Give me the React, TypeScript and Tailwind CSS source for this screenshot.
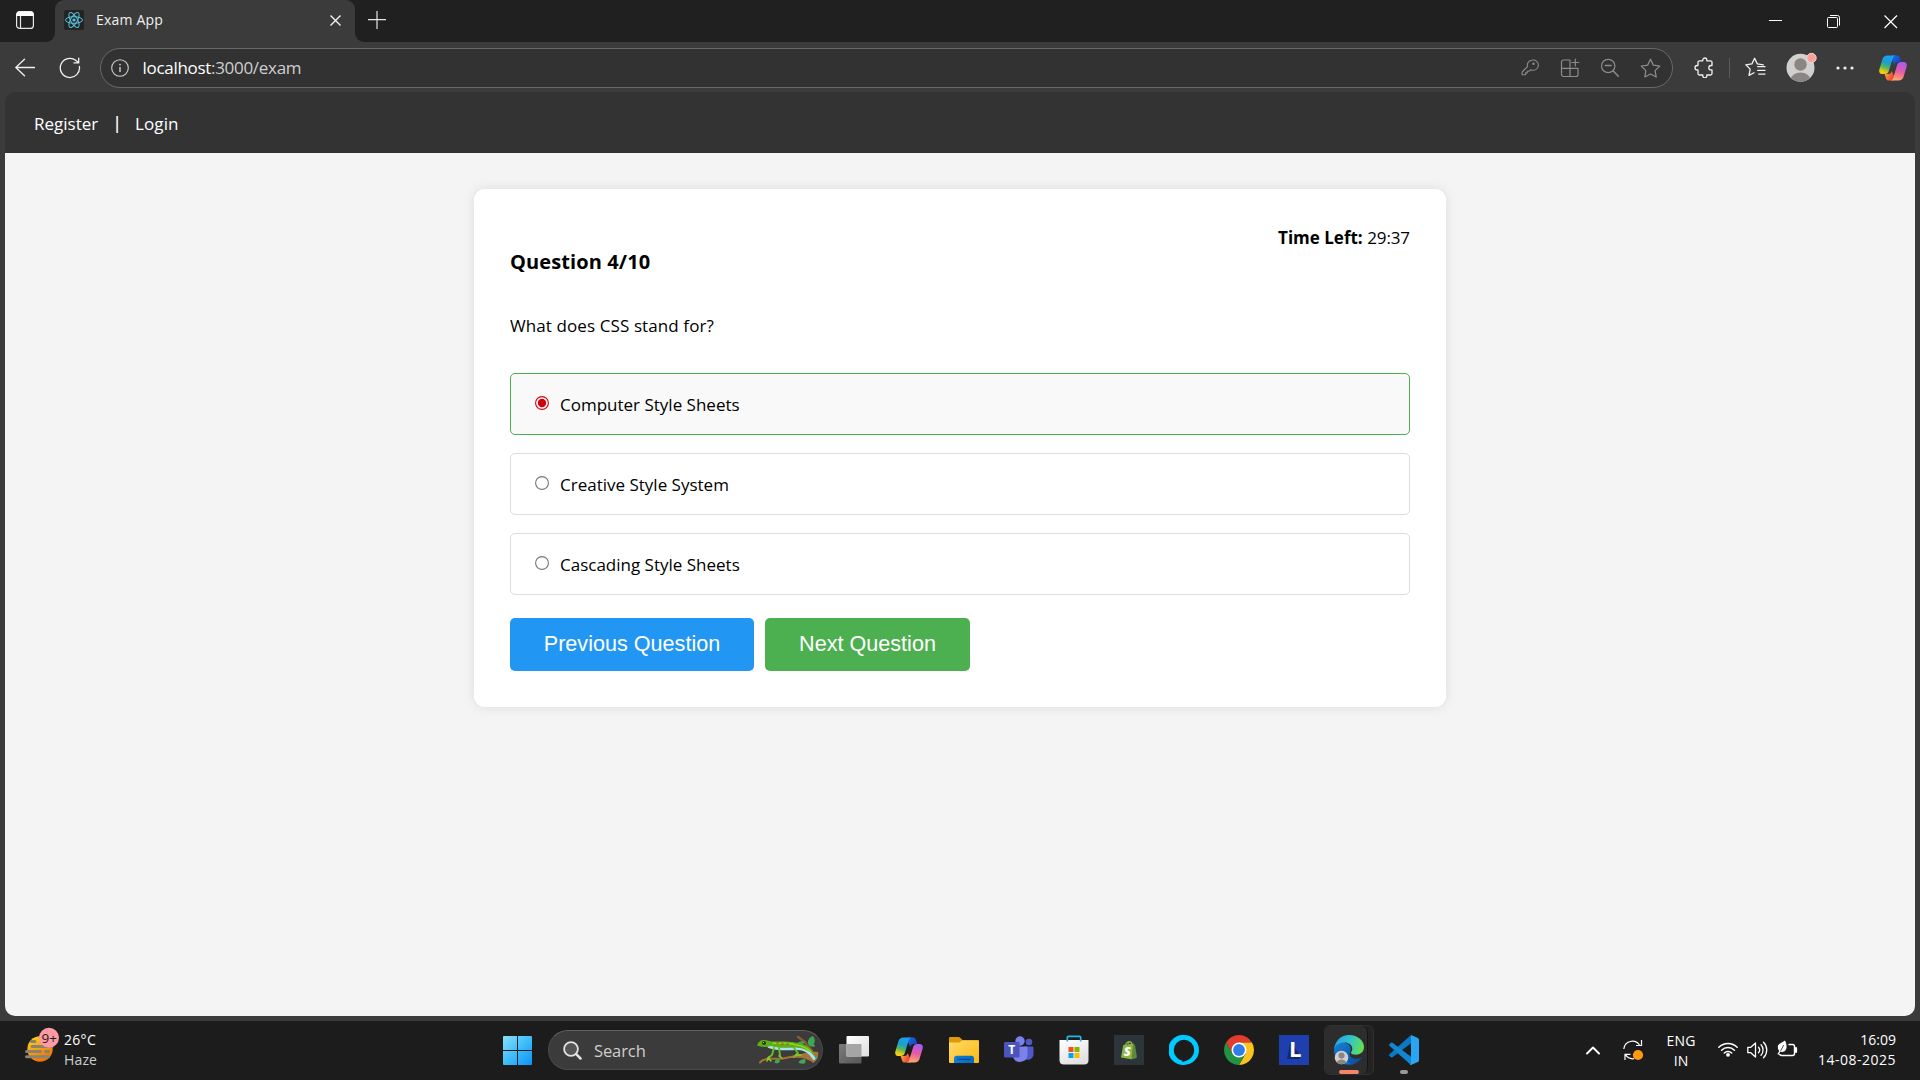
import type { ReactNode } from "react";

/* ---------- shared artwork ---------- */

function Copilot({ id, className }: { id: string; className: string }) {
  const blue = id + "-blue";
  const dark = id + "-dark";
  const pink = id + "-pink";
  const orange = id + "-orange";
  return (
    <svg viewBox="0 0 28 26" className={className}>
      <defs>
        <linearGradient id={blue} x1="0.6" y1="0" x2="0.3" y2="1">
          <stop offset="0" stopColor="#1da0f2" />
          <stop offset="0.4" stopColor="#1b9fc9" />
          <stop offset="0.65" stopColor="#55b75a" />
          <stop offset="0.9" stopColor="#f2cc12" />
        </linearGradient>
        <linearGradient id={dark} x1="0" y1="0" x2="1" y2="1">
          <stop offset="0" stopColor="#1a6fe8" />
          <stop offset="1" stopColor="#1238b0" />
        </linearGradient>
        <linearGradient id={pink} x1="0.6" y1="0" x2="0.4" y2="1">
          <stop offset="0" stopColor="#a45cf2" />
          <stop offset="0.5" stopColor="#e85aa6" />
          <stop offset="1" stopColor="#ffab62" />
        </linearGradient>
        <linearGradient id={orange} x1="0" y1="0" x2="1" y2="0.4">
          <stop offset="0" stopColor="#ffb33c" />
          <stop offset="1" stopColor="#ea4436" />
        </linearGradient>
      </defs>
      <path d="M13 .5h5c1.800 0 2.600 1 3.100 2.600L22.300 7h-3.500c-2 0-3 1-3.600 3L13 5z" fill={`url(#${dark})`} />
      <path d="M15 25.500H10c-1.800 0-2.600-1-3.100-2.600L5.700 19h3.500c2 0 3-1 3.600-3L15 21z" fill={`url(#${orange})`} />
      <path d="M8.500.5h8c-1.700.3-2.400 1.500-3 3.500l-3.700 12c-.7 2.200-1.900 3-4 3H3.500C.8 19-.3 17.200.4 14.300L3.500 4C4.200 1.700 5.800.5 8.500.5z" fill={`url(#${blue})`} />
      <path d="M19.500 25.500h-8c1.700-.3 2.400-1.500 3-3.500l3.700-12c.7-2.200 1.900-3 4-3h2.300c2.700 0 3.800 1.800 3.100 4.700L24.500 22c-.7 2.300-2.300 3.500-5 3.500z" fill={`url(#${pink})`} />
    </svg>
  );
}

function ReactLogo() {
  return (
    <span className="flex h-5 w-5 shrink-0 items-center justify-center rounded-[2px] bg-[#232323]">
      <svg viewBox="-10 -10 20 20" className="h-5 w-5" fill="none" stroke="#58c4dc" strokeWidth="1">
        <circle r="1.600" fill="#58c4dc" stroke="none" />
        <ellipse rx="8.500" ry="3.300" />
        <ellipse rx="8.500" ry="3.300" transform="rotate(60)" />
        <ellipse rx="8.500" ry="3.300" transform="rotate(120)" />
      </svg>
    </span>
  );
}

/* ---------- browser chrome ---------- */

function TitleBar() {
  return (
    <div className="flex h-[42px] bg-[#3b3b3b]">
      <div className="flex w-[55px] items-start rounded-br-[9px] bg-[#202020] pt-[11px] pl-4">
        <svg viewBox="0 0 18 18" className="h-[18px] w-[18px]">
          <rect x=".6" y=".6" width="16.800" height="16.800" rx="3" fill="none" stroke="#e6e6e6" strokeWidth="1.200" />
          <path d="M.5 5V3.500a3 3 0 0 1 3-3h11a3 3 0 0 1 3 3V5z" fill="#fff" />
          <path d="M4.500 5v12" stroke="#e6e6e6" strokeWidth="1.200" />
        </svg>
      </div>
      <div className="bg-[#202020]">
        <div className="flex h-[42px] w-[300px] items-start rounded-t-[9px] bg-[#3b3b3b] pt-[10px] pl-[9px]">
          <ReactLogo />
          <span className="ml-3 w-[68px] text-[14px] leading-5 tracking-[0.200px] whitespace-nowrap text-[#f0f0f0]">Exam App</span>
          <svg viewBox="0 0 11 11" className="mt-[5px] ml-[166px] h-[11px] w-[11px]" stroke="#f3f3f3" strokeWidth="1.400">
            <path d="M.5.5l10 10M10.500.5l-10 10" />
          </svg>
        </div>
      </div>
      <div className="flex flex-1 items-start rounded-bl-[9px] bg-[#202020] pl-[13px]">
        <svg viewBox="0 0 18 18" className="mt-[11px] h-[18px] w-[18px]" stroke="#e6e6e6" strokeWidth="1.200">
          <path d="M9 0v18M0 8.600h18" />
        </svg>
        <span className="flex-1" />
        <svg viewBox="0 0 13 13" className="mt-[15px] h-[13px] w-[13px]" stroke="#fff" strokeWidth="1">
          <path d="M0 5.500h13" />
        </svg>
        <svg viewBox="0 0 14 14" className="mt-[15px] ml-[45px] h-[14px] w-[14px]" fill="none" stroke="#fff" strokeWidth="1">
          <rect x=".5" y="2.500" width="10" height="10" rx="1" />
          <path d="M3 .5h7.500a2 2 0 0 1 2 2V10.500" />
        </svg>
        <svg viewBox="0 0 14 14" className="mt-[15px] mr-[22px] ml-[43px] h-[14px] w-[14px]" stroke="#fff" strokeWidth="1.200">
          <path d="M.5.5l12.500 12.500M13 .5L.5 13" />
        </svg>
      </div>
    </div>
  );
}

const STAR = "M10 1.200l2.700 5.600 6.100.9-4.400 4.300 1 6.100L10 15.200l-5.400 2.900 1-6.100L1.200 7.700l6.100-.9z";

function AddressIcon({ children, className }: { children: ReactNode; className: string }) {
  return (
    <svg viewBox="0 0 20 20" className={className} fill="none" stroke="#8c8c8c" strokeWidth="1.200" strokeLinejoin="round" strokeLinecap="round">
      {children}
    </svg>
  );
}

function Toolbar() {
  return (
    <div className="flex h-[50px] items-start bg-[#3b3b3b] pt-[6px]">
      <svg viewBox="0 0 20 20" className="mt-[9px] ml-[15px] h-5 w-5 shrink-0" fill="none" stroke="#f0f0f0" strokeWidth="1.300" strokeLinecap="round" strokeLinejoin="round">
        <path d="M19.500 10.500H.8M9.500 2.200L.8 10.500l8.700 8.300" />
      </svg>
      <svg viewBox="0 0 22 22" className="mt-[9px] ml-6 h-[22px] w-[22px] shrink-0" fill="none" stroke="#f0f0f0" strokeWidth="1.300" strokeLinecap="round" strokeLinejoin="round">
        <path d="M20.400 9.500A9.600 9.600 0 1 1 17 3.500l2.500 2.200M19.700 1.200v4.700h-4.700" />
      </svg>
      <div className="ml-[19px] flex h-10 w-[1573px] shrink-0 items-center rounded-full border border-[#696969] bg-[#323232]">
        <svg viewBox="0 0 18 18" className="ml-[10px] h-[18px] w-[18px]" fill="none" stroke="#cfcfcf" strokeWidth="1.100">
          <circle cx="9" cy="9" r="8.300" />
          <path d="M9 8v5" strokeWidth="1.400" />
          <circle cx="9" cy="5.600" r=".9" fill="#cfcfcf" stroke="none" />
        </svg>
        <span className="ml-[13.500px] text-[17px] leading-5 tracking-[-0.300px] text-[#cfcfcf]">
          <span className="text-white">localhost</span>:3000/exam
        </span>
        <span className="flex-1" />
        <AddressIcon className="h-5 w-5">
          <path d="M12.300 2.200a5.600 5.600 0 1 1-.8 10.300L9.300 14.200H7.500V16H5.700v2H2v-3l5.800-5.800a5.600 5.600 0 0 1 4.500-7z" transform="translate(.3 .2) scale(.92)" />
          <circle cx="13.500" cy="5.800" r=".6" fill="#8c8c8c" />
        </AddressIcon>
        <AddressIcon className="ml-[20px] h-5 w-5">
          <path d="M1.500 4a2 2 0 0 1 2-2H10v16.500H3.500a2 2 0 0 1-2-2zM1.500 10.300H18v6.200a2 2 0 0 1-2 2h-6M15.300 1v7M11.800 4.500h7" />
        </AddressIcon>
        <AddressIcon className="ml-[20px] h-5 w-5">
          <circle cx="8.200" cy="8" r="6.700" />
          <path d="M5.200 7.500h6M13 12.800l5.300 5.500" strokeWidth="1.500" />
        </AddressIcon>
        <AddressIcon className="mr-[11px] ml-[20px] h-[21px] w-[21px]">
          <path d={STAR} />
        </AddressIcon>
      </div>
      <svg viewBox="0 0 20 21" className="mt-[9px] ml-[21px] h-[21px] w-5 shrink-0" fill="none" stroke="#f0f0f0" strokeWidth="1.300" strokeLinejoin="round">
        <path d="M4 5.300a1.500 1.500 0 0 1 1.500-1.500h3.300V3a2 2 0 0 1 4 0v.8h3.700a1.500 1.500 0 0 1 1.500 1.500v3.200h-1a2.200 2.200 0 0 0 0 4.400h1v3.600a1.500 1.500 0 0 1-1.500 1.500h-3.700v.8a2 2 0 0 1-4 0V18H5.500A1.500 1.500 0 0 1 4 16.500v-3.600H3.200a2.200 2.200 0 0 1 0-4.400H4z" />
      </svg>
      <span className="mt-[10px] ml-[15px] h-5 w-px shrink-0 bg-[#5c5c5c]" />
      <svg viewBox="0 0 22 21" className="mt-[9px] ml-[14px] h-[21px] w-[22px] shrink-0" fill="none" stroke="#f0f0f0" strokeWidth="1.300" strokeLinejoin="round" strokeLinecap="round">
        <path d="M19.300 7.800l-6-.9-2.700-5.600-2.700 5.600-6.100.9 4.400 4.300-1.200 6.300 5-2.700M13.700 9.700H21M13.700 13.400H21M14.700 17.100H21" />
      </svg>
      <svg viewBox="0 0 31 30" className="mt-[4px] ml-[20px] h-[30px] w-[31px] shrink-0">
        <defs>
          <clipPath id="profile-disc">
            <circle cx="14.500" cy="15.800" r="14" />
          </clipPath>
        </defs>
        <circle cx="14.500" cy="15.800" r="14" fill="#d2d0ce" />
        <g clipPath="url(#profile-disc)" fill="#8a8684">
          <circle cx="14.500" cy="12.500" r="6.200" />
          <ellipse cx="14.500" cy="28" rx="10" ry="7.500" />
        </g>
        <circle cx="25.500" cy="6" r="4.700" fill="#ff9f99" stroke="#e6dada" strokeWidth="1" />
      </svg>
      <svg viewBox="0 0 18 4" className="mt-[18px] ml-[19px] h-1 w-[18px] shrink-0" fill="#f0f0f0">
        <circle cx="2" cy="2" r="1.600" />
        <circle cx="9" cy="2" r="1.600" />
        <circle cx="16" cy="2" r="1.600" />
      </svg>
      <Copilot id="edge-copilot" className="mt-[7px] ml-[25px] h-[26px] w-[28px] shrink-0" />
    </div>
  );
}

/* ---------- exam page ---------- */

const OPTIONS = [
  { label: "Computer Style Sheets", checked: true },
  { label: "Creative Style System", checked: false },
  { label: "Cascading Style Sheets", checked: false },
];

function Option({ label, checked }: { label: string; checked: boolean }) {
  return (
    <label
      className={
        checked
          ? "flex h-[62px] items-center rounded-[5px] border border-[#4caf50] bg-[#f9f9f9] pl-[23.500px]"
          : "flex h-[62px] items-center rounded-[5px] border border-[#dddddd] bg-white pl-[23.500px]"
      }
    >
      <svg viewBox="0 0 14 14" className="-mt-[2px] h-[14px] w-[14px]">
        <circle cx="7" cy="7" r="6.400" fill="#fff" stroke={checked ? "#d1000f" : "#767676"} strokeWidth="1.100" />
        {checked && <circle cx="7" cy="7" r="4.200" fill="#d1000f" />}
      </svg>
      <span className="mt-px ml-[11.500px] text-[17px] leading-6">{label}</span>
    </label>
  );
}

function ExamPage() {
  return (
    <div className="mx-[5px] flex h-[924px] flex-col">
      <nav className="flex h-[61px] shrink-0 items-center rounded-t-[10px] bg-[#333333] pt-[2px] pl-[29px] text-[17px] text-white">
        <span className="w-[65px]">Register</span>
        <span className="w-[36px] text-center font-['Liberation_Sans',Arial,sans-serif] text-[18px]">|</span>
        <span className="tracking-[0.100px]">Login</span>
      </nav>
      <div className="flex-1 rounded-b-[10px] bg-[#f4f4f4] pt-9">
        <main className="mx-auto h-[518px] w-[972px] rounded-[11px] bg-white px-9 pt-9 text-black shadow-[0_0_12px_rgba(0,0,0,0.1)]">
          <div className="h-6 pt-px text-right text-[17px] leading-6">
            <strong className="font-bold">Time Left:</strong> <span className="tracking-[-0.1px]">29:37</span>
          </div>
          <h2 className="text-[20px] leading-[26px] font-bold tracking-[0.1px]">Question 4/10</h2>
          <p className="mt-[39px] text-[17px] leading-6 tracking-[0.1px]">What does CSS stand for?</p>
          <div className="mt-[35px] flex flex-col gap-[18px]">
            {OPTIONS.map((o) => (
              <Option key={o.label} label={o.label} checked={o.checked} />
            ))}
          </div>
          <div className="mt-[23px] flex gap-[11px] font-['Liberation_Sans',Arial,sans-serif] text-[21.600px] text-white">
            <button className="h-[53px] w-[244px] rounded-[5px] bg-[#2196f3]">Previous Question</button>
            <button className="h-[53px] w-[205px] rounded-[5px] bg-[#4caf50]">Next Question</button>
          </div>
        </main>
      </div>
    </div>
  );
}

/* ---------- taskbar ---------- */

function Weather() {
  return (
    <div className="flex w-[200px] pl-[25px]">
      <svg viewBox="0 0 35 36" className="mt-[6px] h-9 w-[35px]">
        <defs>
          <linearGradient id="haze-sun" x1="0.2" y1="0" x2="0.7" y2="1">
            <stop offset="0" stopColor="#ffd21a" />
            <stop offset="1" stopColor="#ee6a05" />
          </linearGradient>
        </defs>
        <circle cx="15" cy="22" r="12.700" fill="url(#haze-sun)" />
        <path d="M6.500 14.500h3.500M7 19.500h20M1.500 24.600h14M20.500 24.600h3M1.500 29.700h22" stroke="#8a8273" strokeWidth="3" strokeLinecap="round" />
        <circle cx="24" cy="10.700" r="10" fill="#ff99a4" />
        <text x="24.200" y="16" textAnchor="middle" fontSize="13.500" fill="#1c1c1c">9+</text>
      </svg>
      <div className="mt-[9px] ml-[4px] text-[14px] leading-5">
        <div className="tracking-[0.300px] text-white">26°C</div>
        <div className="tracking-[0.150px] text-[#cccccc]">Haze</div>
      </div>
    </div>
  );
}

function StartIcon() {
  return (
    <svg viewBox="0 0 29 29" className="mt-[15px] ml-[303px] h-[29px] w-[29px]">
      <defs>
        <linearGradient id="start-blue" gradientUnits="userSpaceOnUse" x1="0" y1="0" x2="29" y2="29">
          <stop offset="0" stopColor="#8be0fb" />
          <stop offset="0.5" stopColor="#3fbdf8" />
          <stop offset="1" stopColor="#0a94f8" />
        </linearGradient>
      </defs>
      <path d="M0 1q0-1 1-1h13v14H0zM15 0h13q1 0 1 1v13H15zM0 15h14v14H1q-1 0-1-1zM15 15h14v13q0 1-1 1H15z" fill="url(#start-blue)" />
    </svg>
  );
}

function Gecko() {
  return (
    <svg viewBox="0 0 63 30" className="h-[30px] w-[63px]" fill="none" strokeLinecap="round" strokeLinejoin="round">
      <path d="M41 2l7 5c2 5 6 6 9 12" stroke="#8b5a33" strokeWidth="2.400" />
      <path d="M3 27.500C9 21 17 25 26 23.500c9-2 17-3 26-4.500" stroke="#a4703c" strokeWidth="2" />
      <path d="M34 21c10-1 17-5 27-4 1 4-1 9-5 11-4-4-11-6-22-5z" fill="#a9733e" />
      <path d="M51 9c-1-4 2-7 5-8 3 4 2 8-1 9zM48 7c-4-2-7 0-7 1 3 2 6 1 7-1zM51 9c3-2 7 0 7 2-3 2-6 0-7-2z" fill="#3fa653" />
      <path d="M22 24c-4 0-5 3-4 4 4 1 6-1 4-4zM48 24c-5 0-7 3-6 4 5 2 8 0 6-4zM55 21c4-1 6 1 6 2-3 1-5 0-6-2z" fill="#3fa653" />
      <path d="M12 11.500c9 3.500 20 2 28 2 8 0 13 3 17 10" stroke="#a9e2f2" strokeWidth="3" />
      <path d="M17 13l-2 7-4 3M22 13l1 8M37 13l4 5-4 4" stroke="#68bd20" strokeWidth="2" />
      <path d="M11 23l3 3M12 22l-2 4M22 21l3 2M39 20l5 0" stroke="#88d51c" strokeWidth="1.500" />
      <path d="M0 10.500c1-2 2-5 6-5.500 5 0 6 1.500 10 1.500 8 0 15-.5 22 1 12 1 16 6 20 13-6-4-9-7-19-8-10 0-18 1-25-1.500-4 1-9 1.500-14-.5z" fill="#5faf17" />
      <path d="M16 8c8 1 15-1 23 2 8 1 12 4 15 7" stroke="#8cda1d" strokeWidth="1.300" />
      <path d="M20 8h1M25 9h1M30 9h1" stroke="#d83c26" strokeWidth="1.400" />
      <circle cx="7" cy="8" r="2" fill="#243b12" />
      <circle cx="6.500" cy="7.500" r=".6" fill="#e9c83a" />
    </svg>
  );
}

function SearchBox() {
  return (
    <div className="mt-[9px] ml-4 flex h-10 w-[275px] items-center rounded-full border border-[#4a4a4a] border-t-[#626262] bg-[#3b3b3b] pl-[13.500px]">
      <svg viewBox="0 0 19 19" className="h-[19px] w-[19px]" fill="none" stroke="#e3e3e3">
        <circle cx="8" cy="8" r="6.900" fill="#555" strokeWidth="1.800" />
        <path d="M13.200 13.200l4.300 4.300" strokeWidth="2.500" strokeLinecap="round" />
      </svg>
      <span className="mt-[2px] ml-[12.500px] flex-1 text-[16.500px] tracking-[-0.1px] text-[#cfcfcf]">Search</span>
      <span className="mr-[2px]">
        <Gecko />
      </span>
    </div>
  );
}

function Slot({ children }: { children: ReactNode }) {
  return <div className="flex h-[50px] w-[55px] shrink-0 items-center justify-center">{children}</div>;
}

function TaskView() {
  return (
    <svg viewBox="0 0 30 30" className="h-[30px] w-[30px]">
      <defs>
        <linearGradient id="view-light" x1="0" y1="0" x2="1" y2="1">
          <stop offset="0" stopColor="#fff" />
          <stop offset="1" stopColor="#dedede" />
        </linearGradient>
        <linearGradient id="view-dark" x1="0" y1="0" x2="1" y2="1">
          <stop offset="0" stopColor="#7b7b7b" />
          <stop offset="1" stopColor="#575757" />
        </linearGradient>
      </defs>
      <rect x="0" y="9" width="22.500" height="19.500" rx="1" fill="url(#view-dark)" />
      <rect x="7.500" y="1" width="22.500" height="20.500" rx="1" fill="url(#view-light)" />
      <path d="M7.500 9h15v12.500h-15z" fill="#a5a5a5" />
    </svg>
  );
}

function Folder() {
  return (
    <svg viewBox="0 0 30 26" className="h-[26px] w-[30px]">
      <defs>
        <linearGradient id="folder-front" x1="0" y1="0" x2="1" y2="1">
          <stop offset="0" stopColor="#ffdc6a" />
          <stop offset="1" stopColor="#fbb812" />
        </linearGradient>
        <linearGradient id="folder-tray" x1="0" y1="0" x2="1" y2="0">
          <stop offset="0" stopColor="#0c7fd8" />
          <stop offset="1" stopColor="#0a68bd" />
        </linearGradient>
      </defs>
      <path d="M0 1q0-1 1-1h8.500q1 0 1.700.7L13.500 3H29q1 0 1 1v6H0z" fill="#dd9c05" />
      <path d="M0 5.500h9.500q1 0 1.700-.6L13 3.500h16q1 0 1 1V25q0 1-1 1H1q-1 0-1-1z" fill="url(#folder-front)" />
      <path d="M5 26v-4.500q0-2.700 2.700-2.700h14.600q2.700 0 2.700 2.700V26z" fill="url(#folder-tray)" />
      <path d="M8.500 22.300h13" stroke="#084a8a" strokeWidth="1.200" />
    </svg>
  );
}

function Teams() {
  return (
    <svg viewBox="0 0 30 28" className="h-[28px] w-[30px]">
      <circle cx="16" cy="5" r="4.700" fill="#7b83eb" />
      <circle cx="25" cy="6" r="3.300" fill="#5059c9" />
      <path d="M20 10.500h8.300q1.200 0 1.200 1.200v6.800a5.500 5.500 0 0 1-8 4.700z" fill="#5059c9" />
      <path d="M9 10.500h13.500q1 0 1 1V19a7.500 7.500 0 0 1-14.500 2z" fill="#7b83eb" />
      <rect x="0" y="6" width="15.500" height="15.500" rx="1.300" fill="#4b53bc" />
      <text x="7.700" y="18" textAnchor="middle" fontSize="12" fontWeight="700" fill="#fff">T</text>
    </svg>
  );
}

function Store() {
  return (
    <svg viewBox="0 0 30 30" className="h-[30px] w-[30px]">
      <defs>
        <linearGradient id="store-bag" x1="0" y1="0" x2="0.500" y2="1">
          <stop offset="0" stopColor="#fff" />
          <stop offset="1" stopColor="#e1e1e1" />
        </linearGradient>
      </defs>
      <path d="M.5 5h29v20q0 4.500-4.500 4.500H5q-4.500 0-4.500-4.500z" fill="url(#store-bag)" />
      <path d="M8.300 6.500V2.500q0-1.200 1.200-1.200h11q1.200 0 1.200 1.200v4" fill="none" stroke="#27b4ea" strokeWidth="1.700" />
      <path d="M9.500 12H14.500v5H9.500z" fill="#f25022" />
      <path d="M15.500 12H20.500v5H15.500z" fill="#7fba00" />
      <path d="M9.500 18H14.500v5H9.500z" fill="#00a4ef" />
      <path d="M15.500 18H20.500v5H15.500z" fill="#ffb900" />
    </svg>
  );
}

function Shopify() {
  return (
    <svg viewBox="0 0 30 30" className="h-[30px] w-[30px]">
      <path d="M0 0h30v30H0z" fill="#2c3539" />
      <path d="M9.300 10l10.200-1.500L22 23l-4.700 1.200L7 22.500z" fill="#8db543" />
      <path d="M19 8.500l2 1.500 2 12.500-5.500 1.700z" fill="#5c8a3a" />
      <path d="M11.500 10.500c.5-4 5.500-5.500 6-1.500M14 9c0-2 3-3.500 4-.5" fill="none" stroke="#8db543" strokeWidth="1.200" />
      <text x="13.200" y="21" textAnchor="middle" fontSize="13" fontWeight="800" fontStyle="italic" fill="#fff">S</text>
    </svg>
  );
}

function Alexa() {
  return (
    <svg viewBox="0 0 30 30" className="h-[30px] w-[30px]">
      <path d="M15 0a15 15 0 1 0-1.600 30v-4.200c-5-1.500-8.600-5.600-8.600-10.800a10.200 10.200 0 1 1 20.400 0c0 6-4.500 10.500-11.800 12v3l1.600 0A15 15 0 0 0 15 0z" fill="#00caff" />
    </svg>
  );
}

function Chrome() {
  return (
    <svg viewBox="-15 -15 30 30" className="h-[30px] w-[30px]">
      <path d="M-12.990-7.500A15 15 0 0 1 12.990-7.500H0L-6.500 3.750z" fill="#e33b2e" />
      <path d="M12.990-7.500A15 15 0 0 1 0 15L6.500 3.750 0-7.500z" fill="#fcc31e" />
      <path d="M0 15A15 15 0 0 1-12.990-7.500L-6.500 3.750H6.500z" fill="#229342" />
      <circle r="7.500" fill="#fff" />
      <circle r="5.900" fill="#2f7de9" />
    </svg>
  );
}

function LetterTile() {
  return (
    <svg viewBox="0 0 30 30" className="h-[30px] w-[30px] overflow-visible">
      <path d="M0 0h30v30H0z" fill="#1e40af" />
      <path d="M11.500 6L8 24h12l2-2z" fill="#142a68" />
      <text x="10" y="22" fontSize="22" fontWeight="700" fill="#fff">L</text>
    </svg>
  );
}

function Edge() {
  return (
    <svg viewBox="0 0 30 30" className="h-[30px] w-[30px] shrink-0">
      <defs>
        <linearGradient id="edge-top" x1="0" y1="0.300" x2="1" y2="0.500">
          <stop offset="0" stopColor="#269fe0" />
          <stop offset="0.500" stopColor="#2fc3d0" />
          <stop offset="1" stopColor="#66e04c" />
        </linearGradient>
        <linearGradient id="edge-low" x1="0" y1="0" x2="1" y2="1">
          <stop offset="0" stopColor="#1683d6" />
          <stop offset="1" stopColor="#0d4591" />
        </linearGradient>
      </defs>
      <path d="M0 15C0 8 7 6 12 8c4 1.500 6 5 4 9-2 6 6 9 12 5-3 5.500-8 8-13 8C6 30 0 23 0 15z" fill="url(#edge-low)" />
      <path d="M9 12c-3 5 0 13 8 17-8 1-15-4-15.500-11C2 13 6 11 9 12z" fill="#1672c8" />
      <path d="M0 14.500C.8 6 7 0 15 0c9 0 15 6 15 12 0 5-4 7.700-8 7.700-3.500 0-5-1-5-2 0-1 1.300-1.500 1.300-4C18.300 10 14.500 7.500 10.500 7.500 5 7.500 1 10.500 0 14.500z" fill="url(#edge-top)" />
      <circle cx="7.500" cy="22.500" r="6.800" fill="#d2d0ce" />
      <circle cx="7.500" cy="20.500" r="3.100" fill="#8a8684" />
      <path d="M2.800 27.300c1.500-3.600 7.900-3.600 9.400 0-2.500 2.700-7 2.700-9.400 0z" fill="#8a8684" />
    </svg>
  );
}

function VsCode() {
  return (
    <svg viewBox="0 0 30 30" className="h-[30px] w-[30px]">
      <path d="M22 0v8.300L3.500 22.300q-.8.600-1.500 0L.4 20.800q-.7-.8 0-1.500z" fill="#0a79c4" />
      <path d="M22 30v-8.300L3.500 7.700q-.8-.6-1.500 0L.4 9.200q-.7.800 0 1.500z" fill="#1187d3" />
      <path d="M22 0l6.800 2.900Q30 3.500 30 4.800v20.400q0 1.300-1.200 1.900L22 30q-.8.100-1.300-.5l1.300-1z" fill="#2aa5f2" />
    </svg>
  );
}

function Tray() {
  return (
    <div className="ml-auto flex pr-6 text-[14px] leading-5 text-white">
      <svg viewBox="0 0 14 9" className="mt-[25px] h-[9px] w-[14px]" fill="none" stroke="#fff" strokeWidth="1.900" strokeLinecap="round" strokeLinejoin="round">
        <path d="M1 7.500L7 1.500l6 6" />
      </svg>
      <svg viewBox="0 0 22 22" className="mt-[18px] ml-[22px] h-[22px] w-[22px]" fill="none" stroke="#fff" strokeWidth="1.200">
        <path d="M1.800 10A8.600 8.600 0 0 1 17.500 6M19.500 1v5.500H14M3 21v-5.700h5.500M3.500 15.700c2 3 5 4.500 8.500 4" />
        <circle cx="16" cy="16" r="5.100" fill="#ff9a0d" stroke="none" />
      </svg>
      <div className="mt-[9.500px] ml-[22px] w-[30px] text-center">
        <div className="tracking-[0.200px]">ENG</div>
        <div>IN</div>
      </div>
      <svg viewBox="0 0 20 16" className="mt-[20px] ml-[22px] h-4 w-5" fill="none" stroke="#fff" strokeWidth="1.500" strokeLinecap="round">
        <path d="M.8 6.200a13 13 0 0 1 18.400 0M3.600 9.200a9 9 0 0 1 12.800 0M6.300 12a5.200 5.200 0 0 1 7.400 0" />
        <circle cx="10" cy="13.800" r="1.900" fill="#fff" stroke="none" />
      </svg>
      <svg viewBox="0 0 21 18" className="mt-[20px] ml-[9px] h-[18px] w-[21px]" fill="none" stroke="#fff" strokeWidth="1.300" strokeLinejoin="round" strokeLinecap="round">
        <path d="M.8 6.300h3L8.500 2v14l-4.700-4.300h-3zM11.500 6.300a4 4 0 0 1 0 5.400M14 3.800a7.500 7.500 0 0 1 0 10.400M16.500 1.200a11 11 0 0 1 0 15.600" />
      </svg>
      <svg viewBox="0 0 21 18" className="mt-[19px] ml-[9px] h-[18px] w-[21px]" fill="none" stroke="#fff" strokeWidth="1.400" strokeLinejoin="round" strokeLinecap="round">
        <path d="M12 4.500H15.500q2 0 2 2v7q0 2-2 2H5q-1.500 0-2.300-1" />
        <path d="M19 8v4" strokeWidth="2.200" />
        <path d="M.8 7C.8 3.500 4 3.500 8 .5 10.500 5 10.500 12 5 12 2.500 12 .8 10 .8 7z" fill="#fff" stroke="none" />
        <path d="M6.500 5.500L3.500 11" stroke="#1c1c1c" strokeWidth=".8" />
        <path d="M3 11L1.200 14" />
      </svg>
      <div className="mt-[9px] ml-[14px] w-[84px] text-right">
        <div>16:09</div>
        <div className="tracking-[0.500px]">14-08-2025</div>
      </div>
    </div>
  );
}

function Taskbar() {
  return (
    <div className="flex h-[59px] items-start bg-[#1c1c1c]">
      <Weather />
      <StartIcon />
      <SearchBox />
      <div className="mt-[4px] ml-[3px] flex">
        <Slot><TaskView /></Slot>
        <Slot><Copilot id="bar-copilot" className="h-[26px] w-[28px]" /></Slot>
        <Slot><Folder /></Slot>
        <Slot><Teams /></Slot>
        <Slot><Store /></Slot>
        <Slot><Shopify /></Slot>
        <Slot><Alexa /></Slot>
        <Slot><Chrome /></Slot>
        <Slot><LetterTile /></Slot>
        <Slot>
          <div className="relative h-[50px] w-[50px] rounded-[6px] border border-[#303030] bg-[#232323]">
            <div className="flex h-[48px] w-[43px] items-center rounded-[6px] border-r border-[#151515] bg-[#2d2d2d] pl-[9px]">
              <Edge />
            </div>
            <span className="absolute bottom-0 left-[14px] h-1 w-5 rounded-full bg-[#f4846a]" />
          </div>
        </Slot>
        <Slot>
          <div className="relative flex h-[50px] w-[50px] items-center justify-center">
            <VsCode />
            <span className="absolute bottom-px left-[21px] h-1 w-2 rounded-full bg-[#9a9a9a]" />
          </div>
        </Slot>
      </div>
      <Tray />
    </div>
  );
}

export default function App() {
  return (
    <div className="flex h-[1080px] w-[1920px] flex-col overflow-hidden bg-[#3b3b3b] font-['Open_Sans','Noto_Sans',sans-serif]">
      <TitleBar />
      <Toolbar />
      <ExamPage />
      <div className="h-[5px] bg-[#3b3b3b]" />
      <Taskbar />
    </div>
  );
}
